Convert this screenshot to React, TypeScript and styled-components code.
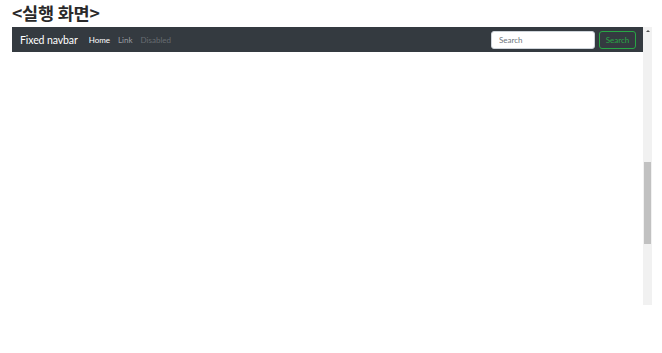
import React from "react";
import styled, { createGlobalStyle } from "styled-components";

const Global = createGlobalStyle`
  html, body { margin: 0; padding: 0; background: #fff; }
  body { font-family: Lato, "Open Sans", sans-serif; }
`;

const Page = styled.div`
  padding: 2px 10px 0 12px;
  width: 662px;
  height: 353px;
  box-sizing: border-box;
`;

const Title = styled.h1`
  margin: 0;
  height: 25px;
  font-family: "Noto Sans CJK KR", "Noto Sans", sans-serif;
  font-weight: 700;
  font-size: 17.5px;
  line-height: 22px;
  color: #2a2a2a;
  letter-spacing: -0.2px;
`;

const Frame = styled.div`
  display: flex;
  width: 640px;
  height: 278px;
`;

const Viewport = styled.div`
  flex: 1;
  display: flex;
  flex-direction: column;
  background: #fff;
`;

const Navbar = styled.nav`
  height: 25px;
  background: #343a40;
  display: flex;
  align-items: center;
  padding: 0 7px 0 8px;
  box-sizing: border-box;
  font-family: Lato, "Open Sans", sans-serif;
`;

const Brand = styled.span`
  color: #fff;
  font-size: 10.5px;
  letter-spacing: -0.1px;
  margin-right: 11px;
  white-space: nowrap;
`;

const NavLink = styled.span<{ $state: "active" | "normal" | "disabled" }>`
  font-size: 8px;
  margin-right: 8px;
  color: ${(p) =>
    p.$state === "active" ? "#fff" : p.$state === "normal" ? "#9a9da0" : "#676c71"};
`;

const Form = styled.form`
  margin-left: auto;
  display: flex;
  gap: 4px;
`;

const Input = styled.input`
  width: 104px;
  height: 18px;
  box-sizing: border-box;
  border: 1px solid #ced4da;
  border-radius: 3px;
  padding: 0 7px;
  font-family: Lato, "Open Sans", sans-serif;
  font-size: 8px;
  color: #495057;
  outline: none;
  &::placeholder { color: #6c757d; }
`;

const Button = styled.button`
  width: 37px;
  height: 18px;
  box-sizing: border-box;
  border: 1px solid #28a745;
  border-radius: 3px;
  background: transparent;
  color: #28a745;
  font-family: Lato, "Open Sans", sans-serif;
  font-size: 8px;
  padding: 0;
`;

const Scrollbar = styled.div`
  width: 9px;
  height: 278px;
  background: #f1f1f1;
  display: flex;
  flex-direction: column;
  align-items: center;
`;

const Arrow = styled.div`
  margin-top: 3px;
  width: 0;
  height: 0;
  border-left: 2px solid transparent;
  border-right: 2px solid transparent;
  border-bottom: 2px solid #505050;
`;

const Thumb = styled.div`
  margin-top: 130px;
  width: 7px;
  height: 82px;
  background: #c1c1c1;
`;

export default function App() {
  return (
    <Page>
      <Global />
      <Title>&lt;실행 화면&gt;</Title>
      <Frame>
        <Viewport>
          <Navbar>
            <Brand>Fixed navbar</Brand>
            <NavLink $state="active">Home</NavLink>
            <NavLink $state="normal">Link</NavLink>
            <NavLink $state="disabled">Disabled</NavLink>
            <Form onSubmit={(e) => e.preventDefault()}>
              <Input placeholder="Search" />
              <Button type="submit">Search</Button>
            </Form>
          </Navbar>
        </Viewport>
        <Scrollbar>
          <Arrow />
          <Thumb />
        </Scrollbar>
      </Frame>
    </Page>
  );
}
